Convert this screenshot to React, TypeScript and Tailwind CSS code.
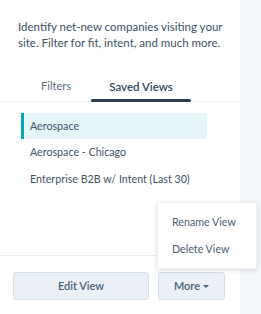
import React from "react";

export default function App() {
  const font = { fontFamily: "Lato, 'Open Sans', sans-serif" };
  return (
    <div className="w-[261px] h-[314px] flex overflow-hidden text-[#33475b]" style={font}>
      <div className="relative w-[240px] h-full bg-white flex flex-col">
        <p className="pt-[19px] pl-[18px] pr-[16px] text-[11.5px] leading-[16px] text-[#3d5166]">
          Identify net-new companies visiting your site. Filter for fit, intent, and much more.
        </p>
        <div className="mt-[26px] flex border-b border-[#eef2f6] pl-[21px]">
          <div className="w-[70px] h-[24px] flex items-start pt-[1px] justify-center text-[11px] text-[#5c6f82]">Filters</div>
          <div className="relative w-[100px] h-[24px] flex items-start pt-[1px] justify-center text-[11.5px] font-semibold text-[#33475b]">
            Saved Views
            <div className="absolute left-0 right-0 bottom-[-1px] h-[3px] rounded-full bg-[#2d3e50]" />
          </div>
        </div>
        <div className="mt-[11px] pl-[21px] w-[207px] flex flex-col text-[10.7px] text-[#425466]">
          <div className="h-[26px] flex items-center pl-[6px] bg-[#e5f5f8] border-l-[3px] border-[#00a4bd]">Aerospace</div>
          <div className="h-[27px] flex items-center pl-[9px]">Aerospace - Chicago</div>
          <div className="h-[26px] flex items-center pl-[9px]">Enterprise B2B w/ Intent (Last 30)</div>
        </div>
        <div className="flex-1" />
        <div className="border-t border-[#e7edf3] h-[59px] pt-[16px] pl-[13px] flex gap-[9px]">
          <button className="w-[136px] h-[28px] rounded-[3px] bg-[#eaf0f6] border border-[#d6e0ea] text-[11px] font-semibold text-[#4a5f75]">Edit View</button>
          <button className="w-[67px] h-[28px] rounded-[3px] bg-[#eaf0f6] border border-[#d6e0ea] text-[11px] font-semibold text-[#4a5f75] flex items-center justify-center gap-[3px]">
            More
            <svg width="6" height="3" viewBox="0 0 6 3"><path d="M0 0h6L3 3z" fill="#4a5f75" /></svg>
          </button>
        </div>
        <div className="absolute left-[157px] top-[202px] w-[100px] h-[67px] bg-white rounded-[2px] shadow-[0_1px_5px_rgba(45,62,80,0.18)] border border-[#eef2f6] flex flex-col py-[6px] text-[10.7px] text-[#4e6073]">
          <div className="h-[27px] flex items-center pl-[14px]">Rename View</div>
          <div className="h-[27px] flex items-center pl-[14px]">Delete View</div>
        </div>
      </div>
      <div className="flex-1 h-full bg-[#f5f8fa]" />
    </div>
  );
}
